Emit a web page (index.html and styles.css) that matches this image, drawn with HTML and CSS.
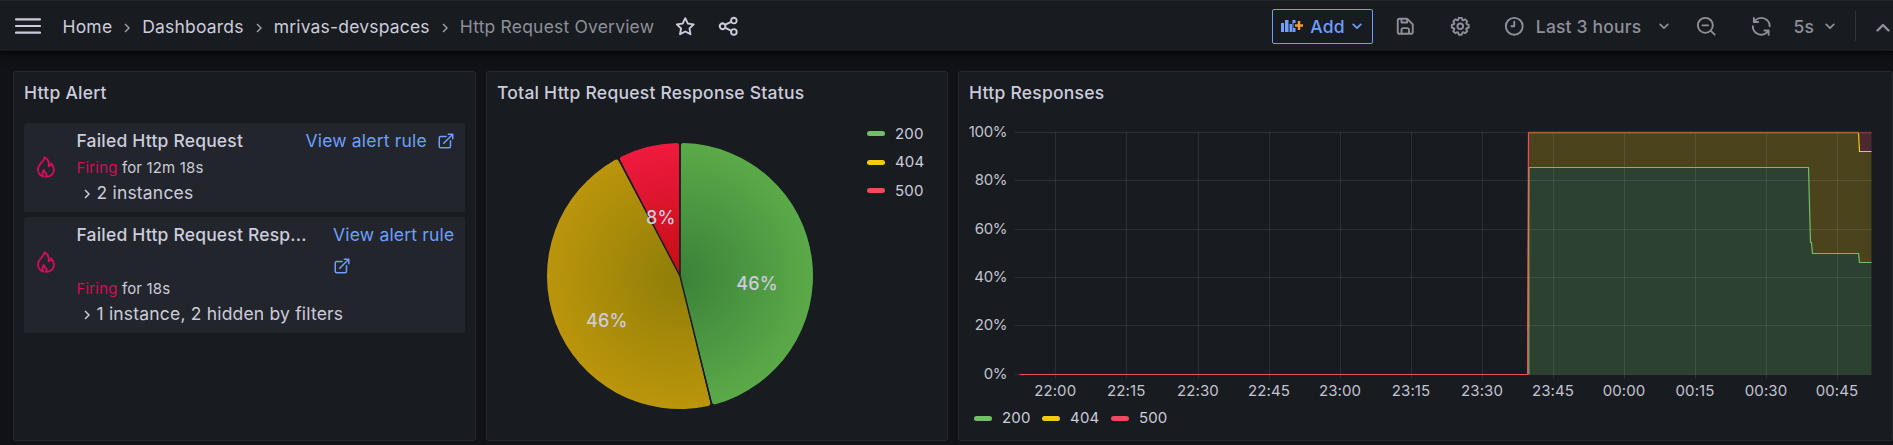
FILE: index.html
```html
<!DOCTYPE html>
<html lang="en">
<head>
<meta charset="utf-8">
<title>Http Request Overview - Dashboards</title>
<link rel="stylesheet" href="styles.css">
</head>
<body>
<svg class="defs" width="0" height="0" aria-hidden="true">
  <symbol id="chev-right" viewBox="0 0 6 10"><path d="M1 1l4 4-4 4" fill="none" stroke="currentColor" stroke-width="1.5"/></symbol>
  <symbol id="chev-down" viewBox="0 0 10 7"><path d="M1.2 1.4L5 5.2l3.8-3.8" fill="none" stroke="currentColor" stroke-width="1.7" stroke-linecap="round" stroke-linejoin="round"/></symbol>
  <symbol id="external" viewBox="0 0 24 24"><path fill="currentColor" d="M18,10.82a1,1,0,0,0-1,1V19a1,1,0,0,1-1,1H5a1,1,0,0,1-1-1V8A1,1,0,0,1,5,7h7.18a1,1,0,0,0,0-2H5A3,3,0,0,0,2,8V19a3,3,0,0,0,3,3H16a3,3,0,0,0,3-3V11.82A1,1,0,0,0,18,10.82Zm3.92-8.2a1,1,0,0,0-.54-.54A1,1,0,0,0,21,2H15a1,1,0,0,0,0,2h3.59L8.29,14.29a1,1,0,0,0,0,1.42,1,1,0,0,0,1.42,0L20,5.41V9a1,1,0,0,0,2,0V3A1,1,0,0,0,21.92,2.62Z"/></symbol>
  <symbol id="fire" viewBox="0 0 18 22"><path fill="none" stroke="currentColor" stroke-width="1.9" stroke-linejoin="round" stroke-linecap="round" d="M7.5 1.2C7.6 5.500 1 7.500 1 13.500C1 17 3.200 19.500 6.300 20.600C5 18 5.300 16 6.800 14C7.300 15.700 8.300 16.800 9.400 17.500C9.800 18.800 9.300 20 8.600 20.800C13.300 21 17 18 17 13.500C17 11 15.600 9.300 14.200 7.600C14 9 13.200 9.900 11.600 10.400C12.500 6.700 11 3.300 7.500 1.200Z"/></symbol>
</svg>

<header class="topbar">
  <svg class="menu" viewBox="0 0 26 16"><path d="M1 1.300H25M1 8H25M1 14.700H25" stroke="currentColor" stroke-width="2.200" stroke-linecap="round"/></svg>
  <nav class="crumbs">
    <a>Home</a><svg class="sep"><use href="#chev-right"/></svg>
    <a>Dashboards</a><svg class="sep"><use href="#chev-right"/></svg>
    <a>mrivas-devspaces</a><svg class="sep"><use href="#chev-right"/></svg>
    <span class="current">Http Request Overview</span>
  </nav>
  <svg class="icon star" viewBox="0 0 24 24"><path d="M22,9.67A1,1,0,0,0,21.14,9l-5.69-.83L12.9,3a1,1,0,0,0-1.8,0L8.55,8.16,2.86,9a1,1,0,0,0-.81.68,1,1,0,0,0,.25,1l4.13,4-1,5.68A1,1,0,0,0,6.9,21.44L12,18.77l5.1,2.67a.93.93,0,0,0,.46.12,1,1,0,0,0,.59-.19,1,1,0,0,0,.4-1l-1-5.68,4.13-4A1,1,0,0,0,22,9.67Zm-6.15,4a1,1,0,0,0-.29.88l.72,4.2-3.76-2a1.06,1.06,0,0,0-.94,0l-3.76,2,.72-4.2a1,1,0,0,0-.29-.88l-3-3,4.21-.61a1,1,0,0,0,.76-.55L12,5.7l1.88,3.82a1,1,0,0,0,.76.55l4.21.61Z"/></svg>
  <svg class="icon share" viewBox="0 0 24 24"><path d="M18,14a4,4,0,0,0-3.080,1.480l-5.100-2.350a3.640,3.640,0,0,0,0-2.260l5.100-2.350A4,4,0,1,0,14,6a4.170,4.170,0,0,0,.070.710L8.790,9.140a4,4,0,1,0,0,5.720l5.280,2.430A4.170,4.170,0,0,0,14,18a4,4,0,1,0,4-4ZM18,4a2,2,0,1,1-2,2A2,2,0,0,1,18,4ZM6,14a2,2,0,1,1,2-2A2,2,0,0,1,6,14Zm12,6a2,2,0,1,1,2-2A2,2,0,0,1,18,20Z"/></svg>
  <div class="tools">
    <button class="add">
      <svg class="add-icon" viewBox="0 0 22 14"><path fill="#6e9fff" d="M0 4h3v9H0zM4 1h3.500v12H4zM8.500 5h2.500v8H8.500zM11.500 1h3v3h-3zM11.500 4h1v6h-1zM11.500 9h3v4h-3z"/><path fill="#ff9830" d="M16.800 2h2.400v3.200H22v2.600h-2.800V11h-2.400V7.800H14V5.200h2.800z"/></svg>
      <span>Add</span>
      <svg class="chev"><use href="#chev-down"/></svg>
    </button>
    <svg class="icon save" viewBox="0 0 24 24"><path d="M20.71,9.29l-6-6a1,1,0,0,0-.32-.21A1.09,1.09,0,0,0,14,3H6A3,3,0,0,0,3,6V18a3,3,0,0,0,3,3H18a3,3,0,0,0,3-3V10A1,1,0,0,0,20.71,9.29ZM9,5h4V7H9Zm6,14H9V16a1,1,0,0,1,1-1h4a1,1,0,0,1,1,1Zm4-1a1,1,0,0,1-1,1H17V16a3,3,0,0,0-3-3H10a3,3,0,0,0-3,3v3H6a1,1,0,0,1-1-1V6A1,1,0,0,1,6,5H7V8A1,1,0,0,0,8,9h6a1,1,0,0,0,1-1V6.41l4,4Z"/></svg>
    <svg class="icon cog" viewBox="0 0 24 24"><path d="M21.32,9.55l-1.89-.63.89-1.78A1,1,0,0,0,20.13,6L18,3.87a1,1,0,0,0-1.15-.19l-1.78.89-.63-1.89A1,1,0,0,0,13.5,2h-3a1,1,0,0,0-.95.68L8.92,4.57,7.14,3.68A1,1,0,0,0,6,3.87L3.87,6a1,1,0,0,0-.19,1.15l.89,1.78-1.89.63A1,1,0,0,0,2,10.5v3a1,1,0,0,0,.68.95l1.89.63-.89,1.78A1,1,0,0,0,3.87,18L6,20.13a1,1,0,0,0,1.15.19l1.78-.89.63,1.89a1,1,0,0,0,.95.68h3a1,1,0,0,0,.95-.68l.63-1.89,1.78.89A1,1,0,0,0,18,20.13L20.13,18a1,1,0,0,0,.19-1.15l-.89-1.78,1.89-.63A1,1,0,0,0,22,13.5v-3A1,1,0,0,0,21.32,9.55ZM20,12.78l-1.2.4A2,2,0,0,0,17.64,16l.57,1.14-1.1,1.1L16,17.64a2,2,0,0,0-2.79,1.16l-.4,1.2H11.22l-.4-1.2A2,2,0,0,0,8,17.64l-1.14.57-1.1-1.1L6.36,16A2,2,0,0,0,5.2,13.18L4,12.78V11.22l1.2-.4A2,2,0,0,0,6.36,8L5.79,6.89l1.1-1.1L8,6.36A2,2,0,0,0,10.82,5.2l.4-1.2h1.56l.4,1.2A2,2,0,0,0,16,6.36l1.14-.57,1.1,1.1L17.64,8a2,2,0,0,0,1.16,2.79l1.2.4ZM12,8a4,4,0,1,0,4,4A4,4,0,0,0,12,8Zm0,6a2,2,0,1,1,2-2A2,2,0,0,1,12,14Z"/></svg>
    <svg class="icon line clock" viewBox="0 0 24 24"><circle cx="12" cy="12" r="9"/><path d="M12 7v5H9"/></svg>
    <span class="range">Last 3 hours</span>
    <svg class="chev range-chev"><use href="#chev-down"/></svg>
    <svg class="icon line zoom-out" viewBox="0 0 24 24"><circle cx="11" cy="11" r="8"/><path d="M8 11h6M17 17l4 4"/></svg>
    <svg class="icon sync" viewBox="0 0 24 24"><path d="M19.91,15.51H15.38a1,1,0,0,0,0,2h2.4A8,8,0,0,1,4,12a1,1,0,0,0-2,0,10,10,0,0,0,16.88,7.23V21a1,1,0,0,0,2,0V16.5A1,1,0,0,0,19.91,15.51ZM12,2A10,10,0,0,0,5.12,4.77V3a1,1,0,0,0-2,0V7.5a1,1,0,0,0,1,1h4.5a1,1,0,0,0,0-2H6.22A8,8,0,0,1,20,12a1,1,0,0,0,2,0A10,10,0,0,0,12,2Z"/></svg>
    <span class="interval">5s</span>
    <svg class="chev interval-chev"><use href="#chev-down"/></svg>
    <i class="divider"></i>
    <svg class="collapse" viewBox="0 0 14 9"><path d="M1.500 7.500L7 2l5.500 5.500" fill="none" stroke="currentColor" stroke-width="2.400" stroke-linecap="round" stroke-linejoin="round"/></svg>
  </div>
</header>

<main class="grid">
  <section class="panel">
    <h2>Http Alert</h2>
    <ul class="alerts">
      <li class="alert">
        <svg class="fire"><use href="#fire"/></svg>
        <div class="body">
          <div class="row"><span class="name">Failed Http Request</span><a class="link">View alert rule <svg class="ext"><use href="#external"/></svg></a></div>
          <div class="state"><b>Firing</b> for 12m 18s</div>
          <div class="instances"><svg class="sep"><use href="#chev-right"/></svg>2 instances</div>
        </div>
      </li>
      <li class="alert wrapped">
        <svg class="fire"><use href="#fire"/></svg>
        <div class="body">
          <div class="row"><span class="name">Failed Http Request Resp...</span><a class="link">View alert rule <svg class="ext"><use href="#external"/></svg></a></div>
          <div class="state"><b>Firing</b> for 18s</div>
          <div class="instances"><svg class="sep"><use href="#chev-right"/></svg>1 instance, 2 hidden by filters</div>
        </div>
      </li>
    </ul>
  </section>

  <section class="panel">
    <h2>Total Http Request Response Status</h2>
    <div class="pie-wrap">
      <svg class="pie" viewBox="-135 -135 270 270">
        <defs>
          <radialGradient id="g200" gradientUnits="userSpaceOnUse" cx="0" cy="0" r="133"><stop offset="0" stop-color="#3b8239"/><stop offset="1" stop-color="#5aaa49"/></radialGradient>
          <radialGradient id="g404" gradientUnits="userSpaceOnUse" cx="0" cy="0" r="133"><stop offset="0" stop-color="#8f7e08"/><stop offset="1" stop-color="#bb950b"/></radialGradient>
          <radialGradient id="g500" gradientUnits="userSpaceOnUse" cx="0" cy="0" r="133"><stop offset="0" stop-color="#c30e14"/><stop offset="1" stop-color="#ef1a3e"/></radialGradient>
        </defs>
        <path fill="url(#g200)" d="M0 0L.8 -130Q.8 -133 3.800 -132.950A133 133 0 0 1 35.500 128.170Q32.600 128.900 31.890 126.030Z"/>
        <path fill="url(#g404)" transform="rotate(166.150)" d="M0 0L.8 -130Q.8 -133 3.800 -132.950A133 133 0 0 1 35.500 128.170Q32.600 128.900 31.890 126.030Z"/>
        <path fill="url(#g500)" transform="rotate(332.310)" d="M0 0L.8 -130Q.8 -133 3.800 -132.950A133 133 0 0 1 58.420 -119.500Q61.100 -118.140 59.700 -115.490Z"/>
        <path class="gap" d="M0 -134V0L32.070 130.100M0 0L-62.200 -118.600"/>
        <g class="pie-labels"><text x="77" y="13.500">46%</text><text x="-73.300" y="50.500">46%</text><text x="-19.300" y="-52.500">8%</text></g>
      </svg>
      <ul class="legend side">
        <li><i class="c200"></i>200</li><li><i class="c404"></i>404</li><li><i class="c500"></i>500</li>
      </ul>
    </div>
  </section>

  <section class="panel wide">
    <h2>Http Responses</h2>
    <svg class="chart" viewBox="959 110 934 295">
      <path fill="#2d4131" d="M1528.500 374.500V167.500H1808.500L1810.500 242.500H1811.500L1812.500 253.500H1858.500L1859.500 262.500H1871.500V374.500Z"/>
      <path fill="#4a431b" d="M1528.500 167.500V132.500H1858.500L1859.500 151.500H1871.500V262.500H1859.500L1858.500 253.500H1812.500L1811.500 242.500H1810.500L1808.500 167.500Z"/>
      <path fill="#4c282f" d="M1858.500 132.500H1871.500V151.500H1859.500Z"/>
      <path class="gridline" d="M1014.500 132.500H1871.500M1014.500 180.500H1871.500M1014.500 229.500H1871.500M1014.500 277.500H1871.500M1014.500 325.500H1871.500M1014.500 374.500H1871.500"/>
      <path class="gridline" d="M1055.500 132V379M1126.500 132V379M1198.500 132V379M1269.500 132V379M1340.500 132V379M1411.500 132V379M1482.500 132V379M1553.500 132V379M1624.500 132V379M1695.500 132V379M1766.500 132V379M1837.500 132V379"/>
      <path class="series" stroke="#73bf69" d="M1528.800 374.500V167.500H1808.500L1810.500 242.500H1811.500L1812.500 253.500H1858.500L1859.500 262.500H1871.500"/>
      <path class="series" stroke="#f2cc0c" d="M1858.500 132.500L1859.500 151.500H1871.500"/>
      <path fill="none" stroke="#ab5f2d" stroke-width="1.800" d="M1528.500 132.700H1858.500"/>
      <path fill="none" stroke="#793440" stroke-width="1.800" d="M1859 132.700H1871.500"/>
      <path class="series" stroke="#f2495c" d="M1019.500 374.500H1527.500L1528.500 132.500"/>
      <path fill="none" stroke="#d98141" stroke-width=".8" d="M1528 330L1528.800 168"/>
      <g class="axis y"><text x="1007.300" y="137">100%</text><text x="1007.300" y="185">80%</text><text x="1007.300" y="233.800">60%</text><text x="1007.300" y="282">40%</text><text x="1007.300" y="330">20%</text><text x="1007.300" y="379">0%</text></g>
      <g class="axis x"><text x="1055.200" y="396">22:00</text><text x="1126.200" y="396">22:15</text><text x="1198" y="396">22:30</text><text x="1269" y="396">22:45</text><text x="1340" y="396">23:00</text><text x="1411" y="396">23:15</text><text x="1482" y="396">23:30</text><text x="1553" y="396">23:45</text><text x="1624" y="396">00:00</text><text x="1695" y="396">00:15</text><text x="1766" y="396">00:30</text><text x="1837" y="396">00:45</text></g>
    </svg>
    <ul class="legend bottom">
      <li><i class="c200"></i>200</li><li><i class="c404"></i>404</li><li><i class="c500"></i>500</li>
    </ul>
  </section>
</main>
</body>
</html>
```

FILE: styles.css
```css
* { box-sizing: border-box; }
body {
  margin: 0;
  height: 445px;
  overflow: hidden;
  background: #111217;
  color: #ccccdc;
  font: 17.5px/27.5px Inter, Roboto, sans-serif;
  letter-spacing: 0.187px;
}
ul { list-style: none; margin: 0; padding: 0; }
svg { display: block; flex: none; }
.defs { position: absolute; }

/* Top navigation */
.topbar {
  height: 51px;
  display: flex;
  align-items: center;
  padding-left: 15px;
  background: #181b1f;
  border-top: 1px solid #24272c;
  box-shadow: 0 1px 1px #050608, 0 2px 8px 2px #08090c;
}
.menu { width: 26px; height: 16px; margin-right: 21.500px; }
.crumbs { display: flex; align-items: center; padding-top: 2px; white-space: nowrap; }
.sep { width: 6px; height: 10px; }
.crumbs .sep { margin: 2px 12px 0; color: #9c9dab; }
.current { color: #8e8f9b; }
.icon { width: 22.500px; height: 22.500px; fill: currentColor; }
.icon.line { fill: none; stroke: currentColor; stroke-width: 2; stroke-linecap: round; stroke-linejoin: round; }
.star { margin-left: 19.500px; }
.share { margin-left: 21px; }
.tools { display: flex; align-items: center; margin-left: auto; color: #8e8f9b; font-weight: 500; }
.range, .interval, .add span { padding-top: 1px; }
.add {
  display: flex;
  align-items: center;
  width: 101px;
  height: 35px;
  margin-right: 21px;
  padding: 0 0 0 8px;
  background: none;
  border: 1px solid #6e9fff;
  border-radius: 2px;
  color: #6e9fff;
  font: inherit;
  letter-spacing: inherit;
}
.add-icon { width: 22px; height: 14px; margin-right: 7px; }
.chev { width: 10px; height: 7px; }
.add .chev { margin-left: 7px; }
.cog { margin-left: 32px; }
.clock { margin: 0 10px 0 32px; }
.range-chev { margin-left: 18px; }
.zoom-out { margin-left: 26px; }
.sync { margin: 0 21px 0 32px; }
.interval-chev { margin-left: 11px; }
.divider { width: 1px; height: 30px; margin: 0 20px; background: #303338; }
.collapse { width: 14px; height: 9px; margin: 3px 3px 0 0; }

/* Panels */
.grid {
  display: grid;
  grid-template-columns: 463px 462px 935px;
  gap: 10px;
  padding: 20px 0 0 13px;
}
.panel {
  height: 370px;
  background: #181b1f;
  border: 1px solid #25282d;
  border-radius: 2.500px;
}
h2 { margin: 0; padding: 7px 10px; font: inherit; font-weight: 500; letter-spacing: .24px; }

/* Alert list */
.alerts { display: grid; gap: 5px; padding: 9px 10px 0; }
.alert {
  display: flex;
  align-items: center;
  height: 89px;
  padding-left: 12.500px;
  background: #22252b;
  border-radius: 2.500px;
}
.alert.wrapped { height: 116px; }
.fire { width: 18px; height: 22px; margin: 0 22px 0 0; color: #d10e5c; }
.wrapped .fire { margin-bottom: 25px; }
.body { flex: 1; }
.row { display: flex; justify-content: space-between; height: 28.500px; margin-top: -1px; padding-right: 10px; }
.name { font-weight: 500; white-space: nowrap; }
.link { color: #6e9fff; }
.ext { display: inline-block; width: 18px; height: 18px; margin-left: 5px; vertical-align: -3px; }
.wrapped .row { height: 55.500px; padding-right: 8px; }
.wrapped .link { width: 124px; line-height: 31px; margin-top: -2px; white-space: normal; }
.wrapped .ext { margin-left: 0; }
.state { font-size: 15px; line-height: 23px; letter-spacing: .16px; }
.state b { color: #d10e5c; font-weight: 400; }
.instances { display: flex; align-items: center; padding-left: 7px; }
.instances .sep { margin: 4px 7px 0 0; }

/* Pie */
.pie-wrap { display: flex; align-items: flex-start; padding: 27px 0 0 58px; }
.pie { width: 270px; height: 270px; }
.gap { fill: none; stroke: #181b1f; stroke-width: 1.500; }
.pie-labels { fill: #ccccdc; font-size: 18px; font-weight: 500; letter-spacing: .2px; text-anchor: middle; }
.legend { font-size: 15px; line-height: 18px; letter-spacing: .16px; }
.legend li { display: flex; align-items: center; }
.legend i { width: 18px; height: 5px; margin-right: 10px; border-radius: 2.500px; }
.legend .c200 { background: #73bf69; }
.legend .c404 { background: #f2cc0c; }
.legend .c500 { background: #f2495c; }
.side { display: grid; gap: 10.500px; margin: -16px 0 0 52px; }

/* Time series */
.chart { width: 934px; height: 295px; margin-top: -3.500px; }
.gridline { fill: none; stroke: rgba(240, 250, 255, .09); stroke-width: 1; }
.series { fill: none; stroke-width: 1.200; }
.axis { fill: #c3c3d2; font-size: 15px; letter-spacing: .1px; }
.axis.y { text-anchor: end; letter-spacing: -.3px; }
.axis.x { text-anchor: middle; }
.bottom { display: flex; gap: 11.500px; padding: 4px 0 0 15px; }
```
